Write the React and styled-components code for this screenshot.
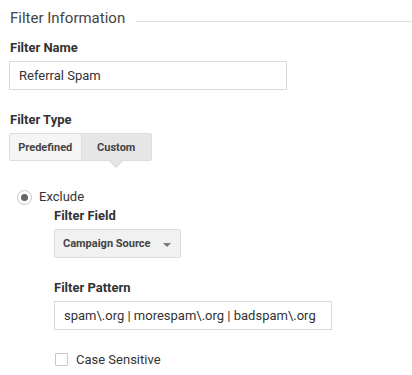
import React from "react";
import styled, { createGlobalStyle } from "styled-components";

const Global = createGlobalStyle`
  html, body { margin: 0; padding: 0; background: #fff; }
  body { font-family: Roboto, "Noto Sans", Arial, sans-serif; color: #333; }
  * { box-sizing: border-box; }
`;

const Page = styled.div`
  width: 412px;
  height: 375px;
  padding: 8px 0 0 9px;
  overflow: hidden;
  display: flex;
  flex-direction: column;
`;

const HeadingRow = styled.div`
  display: flex;
  align-items: flex-start;
  gap: 11px;
`;

const Heading = styled.h2`
  margin: 0 0 0 1px;
  font-size: 15px;
  line-height: 20px;
  font-weight: 400;
  color: #444;
  white-space: nowrap;
`;

const Rule = styled.div`
  flex: 1;
  height: 1px;
  margin-top: 13px;
  background: #e0e0e0;
`;

const Label = styled.div`
  font-size: 13px;
  line-height: 16px;
  font-weight: 700;
  color: #333;
  margin-top: ${(p) => p.$top}px;
  margin-bottom: 5px;
  padding-left: ${(p) => (p.$indent ? 0 : 1)}px;
`;

const TextInput = styled.div`
  width: 278px;
  height: 29px;
  border: 1px solid #d9d9d9;
  background: #fff;
  display: flex;
  align-items: center;
  padding: 0 9px;
  font-size: 13px;
  color: #333;
  white-space: nowrap;
`;

const Toggle = styled.div`
  display: flex;
  width: 143px;
  height: 28px;
  border: 1px solid #dcdcdc;
  border-radius: 2px;
`;

const Segment = styled.div`
  position: relative;
  width: ${(p) => p.$w}px;
  display: flex;
  align-items: center;
  justify-content: center;
  font-size: 11px;
  font-weight: 700;
  color: #444;
  background: ${(p) => (p.$active ? "#e6e6e6" : "#f5f5f5")};
  & + & { border-left: 1px solid #dcdcdc; }

  ${(p) =>
    p.$active &&
    `
    &::after {
      content: "";
      position: absolute;
      left: 50%;
      bottom: -8px;
      margin-left: -7px;
      border-left: 7px solid transparent;
      border-right: 7px solid transparent;
      border-top: 7px solid #dcdcdc;
    }
    &::before {
      content: "";
      position: absolute;
      left: 50%;
      bottom: -6px;
      margin-left: -6px;
      border-left: 6px solid transparent;
      border-right: 6px solid transparent;
      border-top: 6px solid #e6e6e6;
      z-index: 1;
    }
  `}
`;

const RadioRow = styled.div`
  display: flex;
  align-items: center;
  gap: 7px;
  margin: 25px 0 0 8px;
  height: 20px;
  font-size: 13px;
  color: #333;
`;

const Radio = styled.span`
  width: 15px;
  height: 15px;
  border-radius: 50%;
  border: 1px solid #c8c8c8;
  background: #fff;
  display: flex;
  align-items: center;
  justify-content: center;
  margin-top: 2px;
  &::after {
    content: "";
    width: 7px;
    height: 7px;
    border-radius: 50%;
    background: #666;
  }
`;

const Nested = styled.div`
  display: flex;
  flex-direction: column;
  padding-left: 45px;
`;

const Select = styled.div`
  width: 127px;
  height: 29px;
  border: 1px solid #dcdcdc;
  border-radius: 2px;
  background: #f1f1f1;
  display: flex;
  align-items: center;
  justify-content: space-between;
  padding: 0 9px 0 8px;
  font-size: 11px;
  font-weight: 700;
  color: #444;
`;

const Caret = styled.span`
  width: 0;
  height: 0;
  border-left: 4px solid transparent;
  border-right: 4px solid transparent;
  border-top: 4px solid #777;
  margin-top: 2px;
`;

const CheckRow = styled.div`
  display: flex;
  align-items: center;
  gap: 8px;
  margin-top: 19px;
  height: 20px;
  font-size: 13px;
  color: #333;
  padding-left: 1px;
`;

const Box = styled.span`
  width: 13px;
  height: 13px;
  border: 1px solid #c8c8c8;
  border-radius: 1px;
  background: #fff;
  margin-top: 1px;
`;

export default function App() {
  return (
    <>
      <Global />
      <Page>
        <HeadingRow>
          <Heading>Filter Information</Heading>
          <Rule />
        </HeadingRow>
        <Label $top={12}>Filter Name</Label>
        <TextInput>Referral Spam</TextInput>
        <Label $top={22}>Filter Type</Label>
        <Toggle>
          <Segment $w={71}>Predefined</Segment>
          <Segment $w={71} $active>
            Custom
          </Segment>
        </Toggle>
        <RadioRow>
          <Radio />
          Exclude
        </RadioRow>
        <Nested>
          <Label $top={2} $indent>
            Filter Field
          </Label>
          <Select>
            Campaign Source
            <Caret />
          </Select>
          <Label $top={22} $indent>
            Filter Pattern
          </Label>
          <TextInput>spam\.org | morespam\.org | badspam\.org</TextInput>
          <CheckRow>
            <Box />
            Case Sensitive
          </CheckRow>
        </Nested>
      </Page>
    </>
  );
}
